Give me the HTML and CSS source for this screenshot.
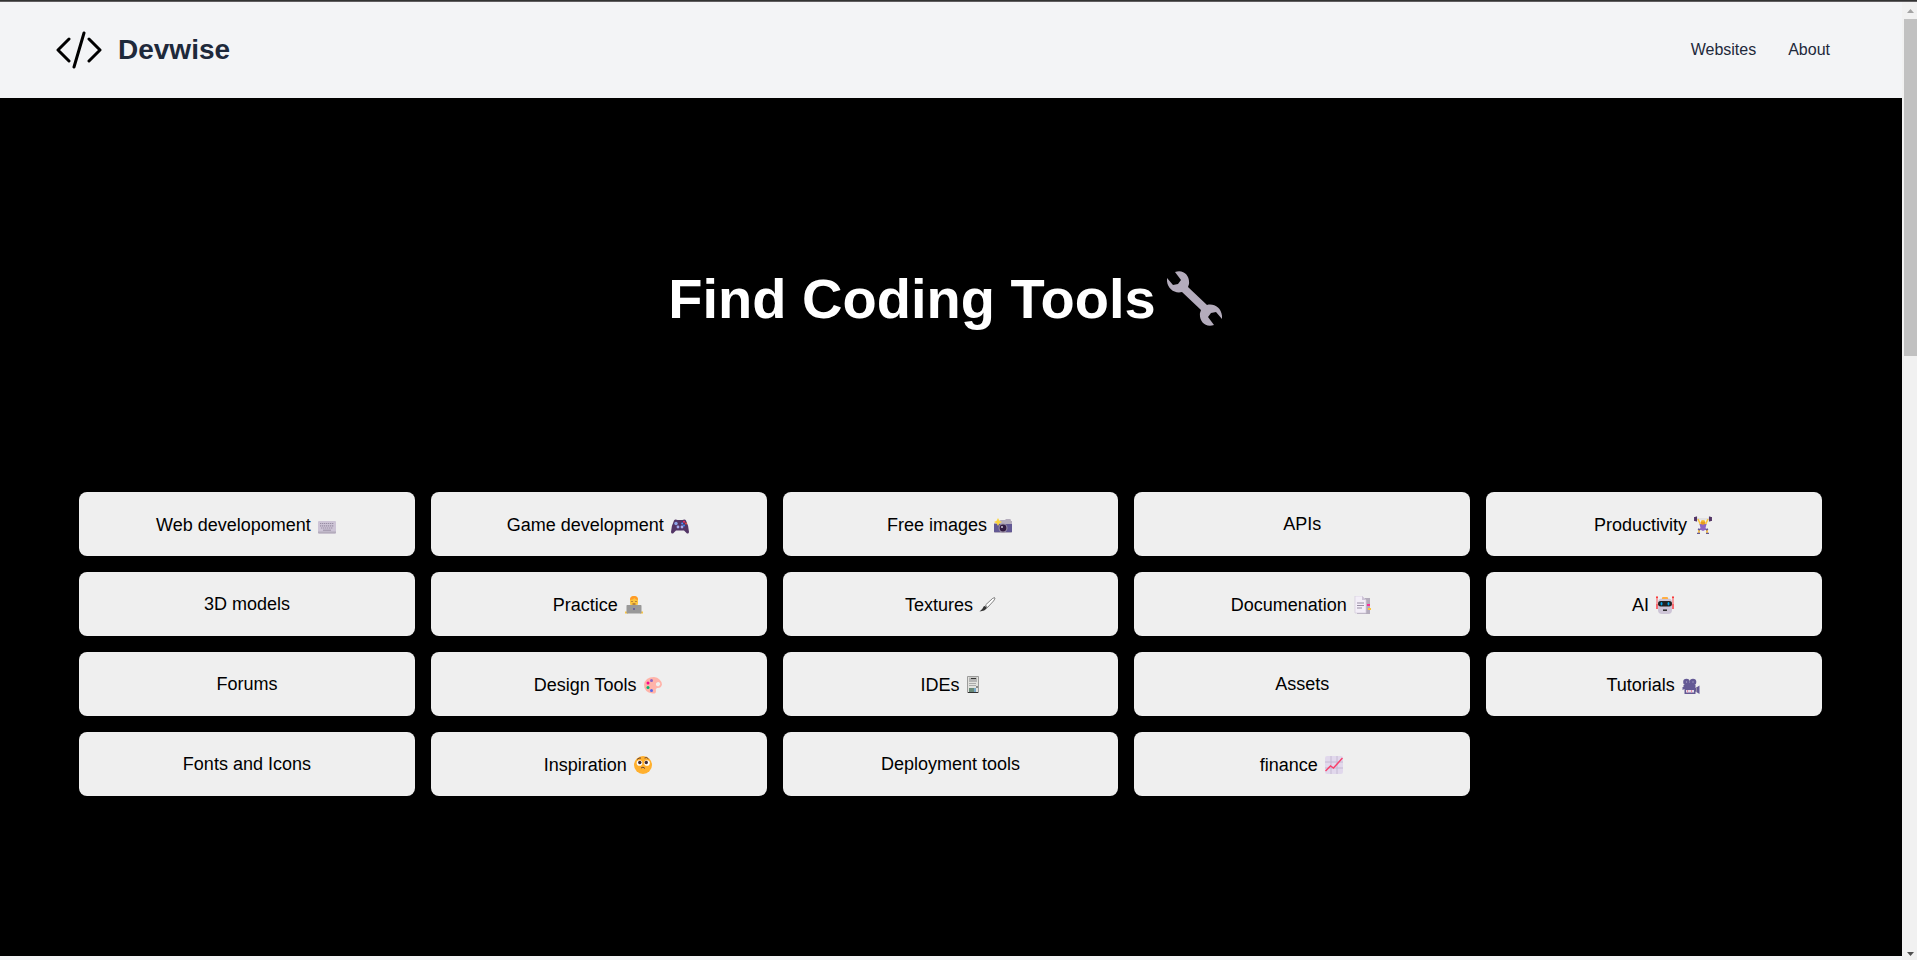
FILE: index.html
```
<!DOCTYPE html>
<html lang="en">
<head>
<meta charset="utf-8">
<title>Devwise</title>
<link rel="stylesheet" href="styles.css">
</head>
<body>
<div class="window-edge"></div>
<div class="shell">
  <div class="page">
    <header class="header">
      <a class="brand" href="#">
        <svg class="logo" viewBox="0 0 46 38" aria-hidden="true"><path d="M13 8 2 19l11 11M28 2 18 36M33 8l11 11-11 11"/></svg>
        <span>Devwise</span>
      </a>
      <nav class="nav">
        <a href="#">Websites</a>
        <a href="#">About</a>
      </nav>
    </header>
    <main class="hero">
      <h1 class="title">Find Coding Tools<svg class="wrench" viewBox="0 0 55 55" aria-hidden="true"><path d="M0 7 6 14l5-1 3-4L8 1C17-2 23 5 22 13l-1 3 19 18C48 32 56 38 55 48l-6-7-5 1-3 4 6 8C38 57 32 50 33 42l1-3-19-18C7 23-1 17 0 7z"/></svg></h1>
      <div class="grid">
        <button class="card">Web developoment <svg class="emoji" viewBox="0 0 18 18"><rect y="5" width="18" height="12.5" rx="1" fill="#cdc4d6"/><path d="M0 15.5h18v1q0 1-1 1H1q-1 0-1-1z" fill="#b4acbc"/><path d="M2 7.5h14M2 9.8h14M3 12h12" stroke="#998ea4" stroke-width="1.2" stroke-dasharray="1.3 .7"/><path d="M5 14.2h8" stroke="#998ea4"/></svg></button>
        <button class="card">Game development <svg class="emoji" viewBox="0 0 18 18"><path d="M3 4.500Q4 3 6.500 4h5Q14 3 15 4.500q3 6 3 11.500-.2 2-2 1.500L13 14.500H5L2 17.500Q.2 18 0 16 0 10.500 3 4.500z" fill="#533566"/><circle cx="5" cy="7.500" r="1.700" fill="#8da5e8"/><circle cx="7" cy="11" r="1.400" fill="#a6aef0"/><circle cx="11" cy="11" r="1.400" fill="#a6aef0"/><circle cx="13" cy="5.800" r="1" fill="#f92f60"/><circle cx="13" cy="9.500" r="1" fill="#3f8cf4"/><circle cx="11.200" cy="7.600" r="1" fill="#5092ff"/><circle cx="15" cy="7.600" r="1" fill="#e3503f"/></svg></button>
        <button class="card">Free images <svg class="emoji" viewBox="0 0 18 18"><path d="M5 6q0-2 2-2h4l1-1h4q1 0 1 2h1v11q0 1-1 1H1q-1 0-1-1V7z" fill="#b4acbc"/><path d="M0 8h18v8H0z" fill="#635994"/><circle cx="9" cy="12" r="4.500" fill="#998ea4"/><circle cx="9" cy="12" r="3.400" fill="#321b41"/><circle cx="8" cy="11" r="1" fill="#cdc4d6"/><path d="m4 2 1.400 2.800L8 6 5.400 7.200 4 10 2.600 7.200 0 6l2.600-1.200z" fill="#fcd53f"/></svg></button>
        <button class="card">APIs</button>
        <button class="card">Productivity <svg class="emoji" viewBox="0 0 18 18"><path d="M2 3h14" stroke="#d3d3d3"/><path d="m4 3 2.500 5.500M14 3l-2.500 5.500" stroke="#fcc43f" stroke-width="1.600"/><path d="M5 17v-4M13 17v-4" stroke="#f5b52e" stroke-width="1.600"/><path d="M5.500 8h7l-1 4 2.500 2h-3l-2 1-2-1H4l2.500-2z" fill="#8d65c5"/><circle cx="9" cy="6.500" r="2.300" fill="#e69a20"/><path d="M6.500 5.500Q9 2.500 11.500 5.500z" fill="#fcc43f"/><path d="M.8 1v4M2.300.5v5M15.700.5v5M17.200 1v4" stroke="#533566" stroke-width="1.500"/><path d="M3 17.500h3M12 17.500h3M4 13l2 1M14 13l-2 1" stroke="#635994" stroke-width="1.400"/></svg></button>
        <button class="card">3D models</button>
        <button class="card">Practice <svg class="emoji" viewBox="0 0 18 18"><path d="M5 4Q5 0 9 0t4 4v3Q13 10.500 9 10.500T5 7z" fill="#fcc53f"/><path d="M5 4Q5 0 9 0t4 4Q11 4 9.500 2 8 4 5 4z" fill="#ff9a28"/><path d="M7 5v1M11 5v1M7.500 8h3" stroke="#7d4533"/><path d="M0 16.500h3M15 16.500h3" stroke="#fcc53f" stroke-width="2"/><rect x="1.500" y="9" width="15" height="8.500" rx=".7" fill="#999"/><circle cx="9" cy="13" r="1" fill="#635994"/></svg></button>
        <button class="card">Textures <svg class="emoji brush" viewBox="0 0 18 18"><path d="M7.500 9 14.500 2.500Q17 1 17 2t-1.500 3L9.500 11.500z" fill="#fff" stroke="#333" stroke-width=".6"/><path d="M6 10q2 0 3 2Q7 15 1.500 15.500q3-2 4.500-5.500z" fill="#333"/></svg></button>
        <button class="card">Documenation <svg class="emoji" viewBox="0 0 18 18"><path d="M3 2h13v16H3z" fill="#b4acbc"/><path d="M1 0h7l4 4v13H1z" fill="#f3eef8" stroke="#d3cadb" stroke-width=".7"/><path d="M8 0v4h4z" fill="#cdc4d6"/><path d="M3 7h7M3 9.500h7M3 12h5" stroke="#998ea4"/><path d="M13 8h3v2h-3z" fill="#f92f9b"/><path d="M14 12h3v2h-3z" fill="#fcc53f"/></svg></button>
        <button class="card">AI <svg class="emoji" viewBox="0 0 18 18"><path d="M1 1v12M17 1v12" stroke="#f8696f" stroke-width="1.200"/><circle cx="1" cy="1.200" r="1" fill="#f8312f"/><circle cx="17" cy="1.200" r="1" fill="#f8312f"/><path d="M0 8h2v5H0zM16 8h2v5h-2z" fill="#f8696f"/><rect x="2" y="2.500" width="14" height="15.500" rx="4" fill="#cdc4d6"/><path d="M6 2q0-1 1-1h4q1 0 1 1v1H6z" fill="#ffae42"/><rect x="2" y="5" width="14" height="5.500" rx="2.700" fill="#212121"/><ellipse cx="5.500" cy="7.700" rx="1" ry="1.700" fill="#00a6ed"/><ellipse cx="12.500" cy="7.700" rx="1" ry="1.700" fill="#00a6ed"/><path d="M7 14.200h4" stroke="#212121" stroke-width="1.500"/></svg></button>
        <button class="card">Forums</button>
        <button class="card">Design Tools <svg class="emoji" viewBox="0 0 18 18"><path fill-rule="evenodd" d="M10 1q7 1 8 7.500Q17 12.500 13 12q-2 1-1 3 0 3-3.500 2.500Q0 16 0 9 1 1 10 1zm4 5q-2.500.5-2 3 1 2 3 1 2-1.500 1-3-1-1-2-1z" fill="#ffb3a9"/><circle cx="7.500" cy="4.500" r="1.500" fill="#8d65c5"/><circle cx="4" cy="7" r="1.500" fill="#f70a8d"/><circle cx="4" cy="11.500" r="1.500" fill="#00b870"/><circle cx="7.500" cy="14.500" r="1.500" fill="#5867e8"/></svg></button>
        <button class="card">IDEs <svg class="emoji tower" viewBox="0 0 12 18"><path d="M.5.500h11v16H.5z" fill="#e2e2de" stroke="#888" stroke-width=".8"/><path d="M2 1.500h8V6H2z" fill="#b4b4b4"/><path d="M4 2.500h5" stroke="#333"/><path d="M2 7.500h7M2 9.500h7" stroke="#aaa"/><path d="M2 12h5v4H2z" fill="#6a8a78"/><path d="M7 12h2v4H7z" fill="#79a8cb"/><path d="M10 10v2M1 16.500h10" stroke="#333"/></svg></button>
        <button class="card">Assets</button>
        <button class="card">Tutorials <svg class="emoji" viewBox="0 0 18 18"><path d="M1.500 9h12v3l4-2.500v8.500l-4-2.500V18h-11v-5l-2 1v-3h1z" fill="#635994"/><circle cx="4.500" cy="6" r="3.300" fill="#635994"/><circle cx="11" cy="6" r="3.300" fill="#635994"/><path d="M6 7h4v3H6z" fill="#635994"/><circle cx="4.500" cy="6" r=".7" fill="#aaa2c8"/><circle cx="11" cy="6" r=".7" fill="#aaa2c8"/><path d="M4 14h8v2.500H4z" fill="#e4dcea"/><path d="M5.500 14v2.500M9.500 14v2.500" stroke="#e58aa6"/><path d="M14.500 11v5" stroke="#998ea4"/></svg></button>
        <button class="card">Fonts and Icons</button>
        <button class="card">Inspiration <svg class="emoji" viewBox="0 0 18 18"><circle cx="9" cy="9" r="9" fill="#ffb02e"/><circle cx="5.500" cy="7" r="2.800" fill="#fff"/><circle cx="13" cy="7" r="2.800" fill="#fff"/><circle cx="5.800" cy="6.500" r="1.700" fill="#402a32"/><circle cx="12.300" cy="6.500" r="1.700" fill="#402a32"/><path d="M3 3.500q2-2 4-1.500M10.500 2q2.500-1.500 4 1M7 12q2-2 4 .5" fill="none" stroke="#6d4534"/></svg></button>
        <button class="card">Deployment tools</button>
        <button class="card">finance <svg class="emoji" viewBox="0 0 18 18"><rect width="18" height="18" rx="2" fill="#e1d8ec"/><path d="M6 0v18M12 0v18M0 6h18M0 12h18" stroke="#c3b7d0" stroke-width=".9"/><path d="m.5 15 5-5 3 2L17.500 2" fill="none" stroke="#f8416c" stroke-width="1.500"/></svg></button>
      </div>
    </main>
  </div>
  <div class="scrollbar" aria-hidden="true">
    <svg class="arrow arrow-up" viewBox="0 0 7 4"><path d="M0 4h7L3.500 0z"/></svg>
    <div class="thumb"></div>
    <div class="track"></div>
    <svg class="arrow" viewBox="0 0 7 4"><path d="M0 0h7L3.500 4z"/></svg>
  </div>
</div>
</body>
</html>
```
FILE: styles.css
```
* {
  box-sizing: border-box;
}

body {
  margin: 0;
  min-height: 100vh;
  display: flex;
  flex-direction: column;
  background: #f3f4f6;
  font-family: "Liberation Sans", Arial, sans-serif;
}

.window-edge {
  height: 2px;
  background: #333;
  border-bottom: 1px solid #605e60;
}

.shell {
  flex: 1;
  display: flex;
}

.page {
  flex: 1;
  min-width: 0;
}

.header {
  height: 96px;
  padding: 0 72px 0 56px;
  display: flex;
  align-items: center;
  justify-content: space-between;
}

.brand {
  display: flex;
  align-items: center;
  gap: 16px;
  color: #1e293b;
  font-size: 28px;
  font-weight: 700;
  text-decoration: none;
}

.logo {
  width: 46px;
  height: 38px;
  fill: none;
  stroke: #000;
  stroke-width: 3;
  stroke-linecap: round;
  stroke-linejoin: round;
}

.nav {
  display: flex;
  gap: 32px;
}

.nav a {
  color: #1e293b;
  font-size: 16px;
  text-decoration: none;
}

.hero {
  padding: 168px 80px 160px 79px;
  background: #000;
}

.title {
  margin: 0 0 160px;
  color: #fff;
  font-size: 56px;
  line-height: 66px;
  font-weight: 700;
  text-align: center;
}

.wrench {
  width: 55px;
  height: 55px;
  margin: 0 11px;
  vertical-align: -8px;
  fill: #b4acbc;
}

.grid {
  display: grid;
  grid-template-columns: repeat(5, 1fr);
  gap: 16px;
}

.card {
  height: 64px;
  padding: 0;
  border: 0;
  border-radius: 8px;
  background: #efefef;
  color: #000;
  font-family: inherit;
  font-size: 18px;
}

.emoji {
  width: 18px;
  height: 18px;
  margin: 3px 2px 0;
  vertical-align: -3px;
}

.brush {
  margin: 3px 0 0;
}

.tower {
  width: 12px;
}

.scrollbar {
  width: 15px;
  padding: 7px 0 4px 2px;
  display: flex;
  flex-direction: column;
  align-items: center;
  background: #f1f1f1;
}

.thumb {
  flex: 337;
  width: 100%;
  margin-top: 6px;
  background: #c1c1c1;
}

.track {
  flex: 596;
}

.arrow {
  width: 7px;
  height: 4px;
  fill: #505050;
}

.arrow-up {
  fill: #a3a3a3;
}
```
